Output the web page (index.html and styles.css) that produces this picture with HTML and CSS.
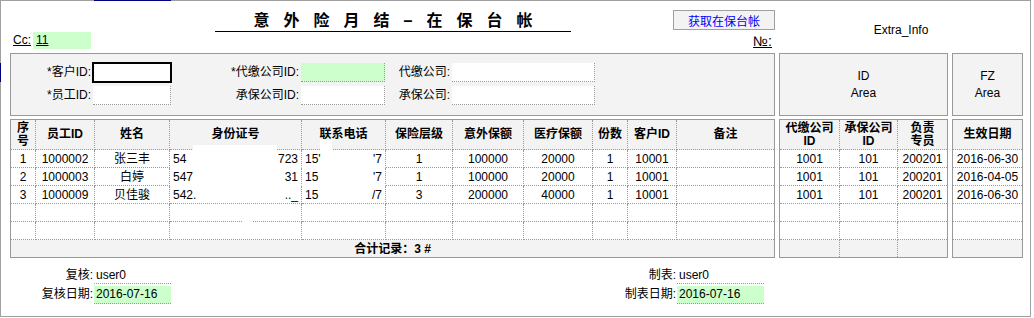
FILE: index.html
```html
<!DOCTYPE html>
<html lang="zh-CN">
<head>
    <meta charset="UTF-8">
    <title>意外险月结 - 在保台帐</title>
    <link rel="stylesheet" href="styles.css">
</head>
<body>
<div class="frame">
    <span class="edge edge-top"></span>
    <span class="edge edge-left"></span>

    <div class="sheet">
        <div class="head-main">
            <div class="cc">
                <span class="cc-label">Cc:</span>
                <span class="cc-value">11</span>
            </div>
            <h1 class="title">意外险月结–在保台帐</h1>
            <div class="head-tools">
                <button class="btn-fetch" type="button">获取在保台帐</button>
                <span class="no-label">№:</span>
            </div>
        </div>
        <div class="head-extra">Extra_Info</div>

        <section class="panel panel-form">
            <label class="lbl">*客户ID:</label>
            <input class="fld fld-active" type="text">
            <label class="lbl">*代缴公司ID:</label>
            <input class="fld fld-green" type="text">
            <label class="lbl">代缴公司:</label>
            <input class="fld" type="text">

            <label class="lbl">*员工ID:</label>
            <input class="fld" type="text">
            <label class="lbl">承保公司ID:</label>
            <input class="fld" type="text">
            <label class="lbl">承保公司:</label>
            <input class="fld" type="text">
        </section>
        <section class="panel panel-area">ID<br>Area</section>
        <section class="panel panel-area">FZ<br>Area</section>

        <table class="grid-table table-main">
            <colgroup>
                <col class="w25"><col class="w59"><col class="w75"><col class="w132"><col class="w84"><col class="w67">
                <col class="w71"><col class="w69"><col class="w35"><col class="w49"><col class="w97">
            </colgroup>
            <thead>
            <tr>
                <th>序<br>号</th>
                <th>员工ID</th>
                <th>姓名</th>
                <th>身份证号</th>
                <th>联系电话</th>
                <th>保险层级</th>
                <th>意外保额</th>
                <th>医疗保额</th>
                <th>份数</th>
                <th>客户ID</th>
                <th>备注</th>
            </tr>
            </thead>
            <tbody>
            <tr>
                <td>1</td><td>1000002</td><td>张三丰</td>
                <td class="redact"><div class="split"><span>54</span><span>723</span></div></td>
                <td class="redact"><div class="split"><span>15'</span><span>'7</span></div></td>
                <td>1</td><td>100000</td><td>20000</td><td>1</td><td>10001</td><td></td>
            </tr>
            <tr>
                <td>2</td><td>1000003</td><td>白婷</td>
                <td class="redact"><div class="split"><span>547</span><span>31</span></div></td>
                <td class="redact"><div class="split"><span>15</span><span>'7</span></div></td>
                <td>1</td><td>100000</td><td>20000</td><td>1</td><td>10001</td><td></td>
            </tr>
            <tr>
                <td>3</td><td>1000009</td><td>贝佳骏</td>
                <td><div class="split"><span>542.</span><span>.._</span></div></td>
                <td><div class="split"><span>15</span><span>/7</span></div></td>
                <td>3</td><td>200000</td><td>40000</td><td>1</td><td>10001</td><td></td>
            </tr>
            <tr><td></td><td></td><td></td><td></td><td></td><td></td><td></td><td></td><td></td><td></td><td></td></tr>
            <tr><td></td><td></td><td></td><td></td><td></td><td></td><td></td><td></td><td></td><td></td><td></td></tr>
            <tr class="total"><td colspan="11">合计记录：3 #</td></tr>
            </tbody>
        </table>

        <table class="grid-table table-id">
            <colgroup><col class="w60"><col class="w58"><col class="w49"></colgroup>
            <thead>
            <tr><th>代缴公司<br>ID</th><th>承保公司<br>ID</th><th>负责<br>专员</th></tr>
            </thead>
            <tbody>
            <tr><td>1001</td><td>101</td><td>200201</td></tr>
            <tr><td>1001</td><td>101</td><td>200201</td></tr>
            <tr><td>1001</td><td>101</td><td>200201</td></tr>
            <tr><td></td><td></td><td></td></tr>
            <tr><td></td><td></td><td></td></tr>
            <tr class="total"><td></td><td></td><td></td></tr>
            </tbody>
        </table>

        <table class="grid-table table-fz">
            <colgroup><col class="w69"></colgroup>
            <thead>
            <tr><th>生效日期</th></tr>
            </thead>
            <tbody>
            <tr><td>2016-06-30</td></tr>
            <tr><td>2016-04-05</td></tr>
            <tr><td>2016-06-30</td></tr>
            <tr><td></td></tr>
            <tr><td></td></tr>
            <tr class="total"><td></td></tr>
            </tbody>
        </table>
    </div>

    <div class="sign">
        <span class="sign-lbl">复核:</span>
        <span class="sign-val">user0</span>
        <span></span>
        <span class="sign-lbl">制表:</span>
        <span class="sign-val">user0</span>

        <span class="sign-lbl">复核日期:</span>
        <span class="sign-val sign-green">2016-07-16</span>
        <span></span>
        <span class="sign-lbl">制表日期:</span>
        <span class="sign-val sign-green">2016-07-16</span>
    </div>

    <!-- redaction patches from the original capture -->
    <span class="mask mask-id"></span>
    <span class="mask mask-tel"></span>
    <span class="mask mask-low"></span>
</div>
</body>
</html>
```

FILE: styles.css
```css
* {
    margin: 0;
    padding: 0;
    box-sizing: border-box;
}
body {
    font-family: 'Liberation Sans', 'Noto Sans CJK SC', sans-serif;
    font-size: 12px;
    color: #000;
    background: #fff;
}
.frame {
    position: relative;
    width: 1031px;
    height: 317px;
    border: 1px solid #a0a0a0;
    background: #fff;
}
.edge {
    position: absolute;
    background: #000080;
}
.edge-top {
    top: -1px;
    left: 93px;
    width: 77px;
    height: 1px;
}
.edge-left {
    top: 62px;
    left: -1px;
    width: 1px;
    height: 19px;
}

/* main layout */
.sheet {
    display: grid;
    grid-template-columns: 765px 169px 71px;
    grid-template-rows: 52px 63px auto;
    column-gap: 4px;
    padding-left: 9px;
}
.head-main {
    display: grid;
    grid-template-columns: 205px 356px 1fr;
}
.cc {
    align-self: end;
    display: flex;
    align-items: center;
    margin-bottom: 4px;
    padding-left: 3px;
}
.cc-label {
    text-decoration: underline;
    line-height: 17px;
}
.cc-value {
    width: 58px;
    height: 17px;
    line-height: 17px;
    margin-left: 2px;
    padding-left: 3px;
    background: #ccffcc;
    text-decoration: underline;
}
.title {
    margin-top: 10px;
    height: 21px;
    line-height: 20px;
    font-size: 16px;
    font-weight: bold;
    letter-spacing: 14px;
    padding-left: 14px;
    text-align: center;
    border-bottom: 1px solid #000;
}
.head-tools {
    display: flex;
    flex-direction: column;
    align-items: flex-end;
}
.btn-fetch {
    margin-top: 9px;
    width: 102px;
    height: 20px;
    font: inherit;
    color: #0000ff;
    background: #f3f3f3;
    border: 1px solid #a0a0a0;
}
.no-label {
    margin-top: 4px;
    margin-right: 3px;
    font-size: 14px;
    line-height: 14px;
    text-decoration: underline;
}
.head-extra {
    grid-column: 2 / span 2;
    text-align: center;
    padding-top: 22px;
    line-height: 14px;
}

/* input panels */
.panel {
    border: 1px solid #999;
    background: #f3f3f3;
}
.panel-form {
    display: grid;
    grid-template-columns: 82px 78px 130px 84px 67px 143px;
    grid-template-rows: 19px 19px;
    row-gap: 4px;
    padding-top: 9px;
}
.lbl {
    text-align: right;
    line-height: 19px;
    padding-right: 2px;
}
.fld {
    height: 19px;
    border: none;
    border-right: 1px dotted #999;
    border-bottom: 1px dotted #999;
    background: #fff;
    font: inherit;
    padding: 0 3px;
    outline: none;
}
.fld-green {
    background: #ccffcc;
}
.fld-active {
    border: 2px solid #000;
    margin: -1px 0 -1px -1px;
    height: 21px;
    width: 80px;
}
.panel-area {
    display: flex;
    align-items: center;
    justify-content: center;
    text-align: center;
    line-height: 17px;
}

/* tables */
.grid-table {
    margin-top: 3px;
    border-collapse: separate;
    border-spacing: 0;
    table-layout: fixed;
    border: 1px solid #999;
    background: #fff;
    align-self: start;
}
.table-main { width: 765px; }
.table-id { width: 169px; }
.table-fz { width: 71px; }
.grid-table th,
.grid-table td {
    border-right: 1px dotted #999;
    border-bottom: 1px dotted #999;
    text-align: center;
    vertical-align: middle;
    white-space: nowrap;
    overflow: hidden;
    height: 18px;
    line-height: 14px;
}
.grid-table th {
    height: 30px;
    line-height: 13px;
    font-weight: bold;
    background: #f3f3f3;
}
.grid-table th:last-child,
.grid-table td:last-child {
    border-right: none;
}
.grid-table .total td {
    height: 17px;
    border-bottom: none;
    background: #f3f3f3;
    font-weight: bold;
}
.grid-table td.redact {
    border-bottom-color: #fff;
}
.split {
    display: flex;
    justify-content: space-between;
    padding: 0 3px;
}
.w25 { width: 25px; }
.w35 { width: 35px; }
.w49 { width: 49px; }
.w58 { width: 58px; }
.w59 { width: 59px; }
.w60 { width: 60px; }
.w67 { width: 67px; }
.w69 { width: 69px; }
.w71 { width: 71px; }
.w75 { width: 75px; }
.w84 { width: 84px; }
.w97 { width: 97px; }
.w132 { width: 132px; }

/* sign-off block */
.sign {
    display: grid;
    grid-template-columns: 93px 77px 420px 86px 87px;
    grid-template-rows: 17px 18px;
    row-gap: 2px;
    padding-top: 9px;
}
.sign-lbl {
    text-align: right;
    line-height: 17px;
    padding-right: 1px;
}
.sign-val {
    line-height: 16px;
    padding-left: 2px;
    border-bottom: 1px dotted #999;
}
.sign-green {
    background: #ccffcc;
    line-height: 17px;
}

.mask {
    position: absolute;
    background: #fff;
}
.mask-id {
    left: 192px;
    top: 144px;
    width: 84px;
    height: 6px;
}
.mask-tel {
    left: 319px;
    top: 139px;
    width: 12px;
    height: 10px;
}
.mask-low {
    left: 241px;
    top: 219px;
    width: 11px;
    height: 3px;
}
```
